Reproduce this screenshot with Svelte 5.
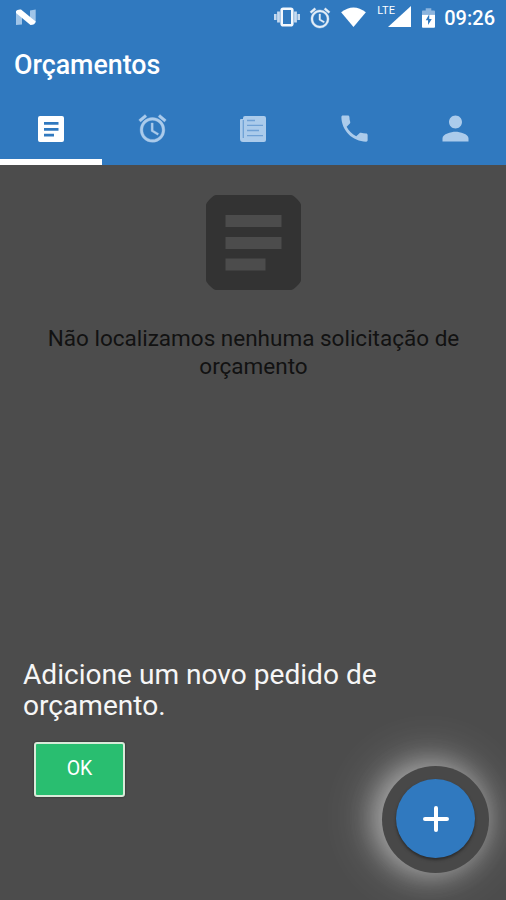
<script>
  const tabs = ['article', 'alarm', 'news', 'phone', 'person'];
  let active = $state('article');
</script>

<div class="screen">
  <header>
    <div class="status">
      <svg class="nougat" viewBox="0 0 20 17" width="20" height="17">
        <path d="M0 3l6 3v9.500l-6 .5zM14 1.500l5.700-1v13l-5.700-3z" fill="#9fc4e8" />
        <path d="M0 2Q1 .2 5 .5L19.700 12.500Q19 16 14.500 16L0 4z" fill="#fff" />
      </svg>
      <div class="indicators">
        <svg width="26" height="20" viewBox="0 0 26 20">
          <path d="M1.200 7v6M4.500 4.500v11M21.500 4.500v11M24.800 7v6" stroke="#c6daef" stroke-width="2.800" fill="none" />
          <rect x="7.700" y="1.700" width="10.600" height="16.600" rx="1.500" fill="none" stroke="#f3f8fd" stroke-width="2.600" />
        </svg>
        <svg class="s-alarm" width="24" height="24" viewBox="0 0 24 24"><path fill="#e4eef8" stroke="#e4eef8" stroke-width=".4" d="M22 5.720l-4.600-3.860-1.290 1.530 4.600 3.860L22 5.720zM7.880 3.390L6.600 1.860 2 5.710l1.290 1.530 4.590-3.850zM12.500 8H11v6l4.750 2.850.75-1.230-4-2.370V8zM12 4c-4.970 0-9 4.030-9 9s4.020 9 9 9a9 9 0 0 0 0-18zm0 16c-3.870 0-7-3.130-7-7s3.130-7 7-7 7 3.130 7 7-3.130 7-7 7z" /></svg>
        <svg class="s-wifi" width="25" height="20" viewBox="0 0 26 21"><path d="M0 5.500Q13-4.500 26 5.500L13 21z" fill="#fff" /></svg>
        <div class="signal">
          <span>LTE</span>
          <svg width="23" height="21" viewBox="0 0 23 21"><path d="M23 0v21H0z" fill="#fff" /></svg>
        </div>
        <svg class="s-battery" width="13" height="20" viewBox="0 0 14 21">
          <path d="M0 7V3.500Q0 2.500 1 2.500h3V0h6v2.500h3q1 0 1 1V7z" fill="#8bb4de" />
          <path d="M0 7h14v13q0 1-1 1H1q-1 0-1-1z" fill="#fff" />
          <path d="M7.800 6.500L4 13h2.500v5L10.500 11.500H7.800z" fill="#3079bf" />
        </svg>
        <span class="time">09:26</span>
      </div>
    </div>
    <h1>Orçamentos</h1>
    <nav>
      {#each tabs as tab}
        <button class="tab" class:active={active === tab} aria-label={tab} onclick={() => (active = tab)}>
          {#if tab === 'article'}
            <svg width="26" height="26" viewBox="0 0 26 26"><path fill-rule="evenodd" d="M2 0h22q2 0 2 2v22q0 2-2 2H2q-2 0-2-2V2Q0 0 2 0zM6 6v2.700h14.500V6zM6 12v2.700h14.500V12zM6 17.800v2.700h10v-2.700z" /></svg>
          {:else if tab === 'alarm'}
            <svg width="33" height="33" viewBox="0 0 24 24"><path d="M22 5.720l-4.600-3.860-1.290 1.530 4.600 3.860L22 5.720zM7.880 3.390L6.600 1.860 2 5.710l1.290 1.530 4.590-3.850zM12.500 8H11v6l4.750 2.850.75-1.230-4-2.370V8zM12 4c-4.970 0-9 4.030-9 9s4.020 9 9 9a9 9 0 0 0 0-18zm0 16c-3.870 0-7-3.130-7-7s3.130-7 7-7 7 3.130 7 7-3.130 7-7 7z" stroke="#abcbeb" stroke-width=".25" /></svg>
          {:else if tab === 'news'}
            <svg width="26" height="26" viewBox="0 0 26 26">
              <path d="M5 0h19q2 0 2 2v22q0 2-2 2H3q-3 0-3-3V4q0-1 1-1h2V2q0-2 2-2z" />
              <path d="M3.300 4v18M7 4.500h8M7 9.300h16M7 14.500h12M7 19.700h16" fill="none" stroke="#6fa1d5" stroke-width="1.300" />
            </svg>
          {:else if tab === 'phone'}
            <svg width="35" height="35" viewBox="0 0 24 24"><path d="M6.620 10.790c1.440 2.830 3.760 5.140 6.590 6.590l2.200-2.200c.27-.27.670-.36 1.020-.24 1.120.37 2.330.57 3.570.57.55 0 1 .45 1 1V20c0 .55-.45 1-1 1-9.390 0-17-7.610-17-17 0-.55.45-1 1-1h3.500c.55 0 1 .45 1 1 0 1.250.2 2.450.57 3.570.11.350.03.740-.25 1.020l-2.200 2.200z" /></svg>
          {:else}
            <svg width="39" height="39" viewBox="0 0 24 24"><path d="M12 12c2.210 0 4-1.790 4-4s-1.790-4-4-4-4 1.790-4 4 1.790 4 4 4zm0 2c-2.670 0-8 1.340-8 4v2h16v-2c0-2.660-5.330-4-8-4z" /></svg>
          {/if}
        </button>
      {/each}
    </nav>
  </header>

  <main>
    <svg class="empty-icon" width="95" height="95" viewBox="0 0 95 95"><path fill="#333" fill-rule="evenodd" d="M10 0h75Q87 0 91 4Q95 8 95 10v75Q95 87 91 91Q87 95 85 95H10Q8 95 4 91Q0 87 0 85V10Q0 8 4 4Q8 0 10 0zM19.500 20v12h56V20zM19.500 42v12h56V42zM19.500 63.500v12h40v-12z" /></svg>
    <p class="empty">Não localizamos nenhuma solicitação de<br />orçamento</p>
    <section>
      <p class="prompt">Adicione um novo pedido de<br />orçamento.</p>
      <button class="ok">OK</button>
    </section>
    <div class="spotlight">
      <button class="fab" aria-label="Adicionar">
        <svg width="26" height="26" viewBox="0 0 26 26"><path d="M13 2v22M2 13h22" stroke="#fff" stroke-width="4" stroke-linecap="round" /></svg>
      </button>
    </div>
  </main>
</div>

<style>
  :global(body) { margin: 0; }
  .screen {
    width: 506px;
    height: 900px;
    overflow: hidden;
    display: flex;
    flex-direction: column;
    background: #4c4c4c;
    font-family: Roboto, "Liberation Sans", sans-serif;
    color: #fff;
  }
  svg { display: block; flex: none; }
  h1, p { margin: 0; }
  button { border: 0; padding: 0; color: inherit; font-family: inherit; }
  header { height: 165px; flex: none; background: #3079bf; }
  .status {
    height: 36px;
    display: flex;
    justify-content: space-between;
    padding: 0 11px 0 16px;
  }
  .nougat { margin-top: 9px; }
  .indicators { display: flex; align-items: flex-start; }
  .indicators > svg:first-child { margin-top: 7px; }
  .s-alarm { margin: 6px 0 0 8px; }
  .s-wifi { margin: 7px 0 0 9px; }
  .signal { position: relative; margin: 6px 0 0 22px; }
  .signal span { position: absolute; left: -11px; top: -2px; font-size: 11px; line-height: 13px; letter-spacing: .3px; }
  .s-battery { margin: 8px 0 0 11px; }
  .time { margin: 6px 0 0 9px; font-size: 20px; line-height: 24px; font-weight: 500; }
  h1 { height: 56px; padding-left: 14px; font-size: 26.800px; line-height: 59px; font-weight: 500; }
  nav { height: 73px; display: flex; }
  .tab {
    flex: 1;
    display: flex;
    align-items: center;
    justify-content: center;
    background: none;
    border-bottom: 6px solid transparent;
    padding: 6px 1px 0 0;
    box-sizing: border-box;
    fill: #abcbeb;
  }
  .tab.active { flex: 0 0 102px; padding-right: 0; fill: #fff; border-color: #fff; }
  main { position: relative; flex: 1; display: flex; flex-direction: column; align-items: center; padding-top: 30px; }
  .empty { margin-top: 34px; padding-left: 1px; font-size: 22.500px; line-height: 28px; text-align: center; color: #121212; }
  section { width: 460px; margin-top: 279px; }
  .prompt { font-size: 28.100px; line-height: 31px; color: #f6f6f6; }
  .ok {
    display: block;
    width: 91px;
    height: 55px;
    margin: 21px 0 0 11px;
    padding-bottom: 2px;
    background: #29be70;
    border: 2px solid #d9ead9;
    border-radius: 3px;
    box-shadow: 0 0 2px #222;
    font-size: 19.500px;
    box-sizing: border-box;
  }
  .spotlight {
    position: absolute;
    left: 381.500px;
    top: 600.500px;
    width: 107px;
    height: 107px;
    border-radius: 50%;
    background: #484848;
    box-shadow: -5px -1px 26px 3px rgba(255, 255, 255, .4), -7px -3px 46px 12px rgba(255, 255, 255, .2);
    display: flex;
    align-items: center;
    justify-content: center;
  }
  .fab {
    width: 79px;
    height: 79px;
    margin: 0 0 1px 1px;
    border-radius: 50%;
    background: #3079bf;
    box-shadow: 0 2px 3px #2b2b2b;
    display: flex;
    align-items: center;
    justify-content: center;
  }
</style>
